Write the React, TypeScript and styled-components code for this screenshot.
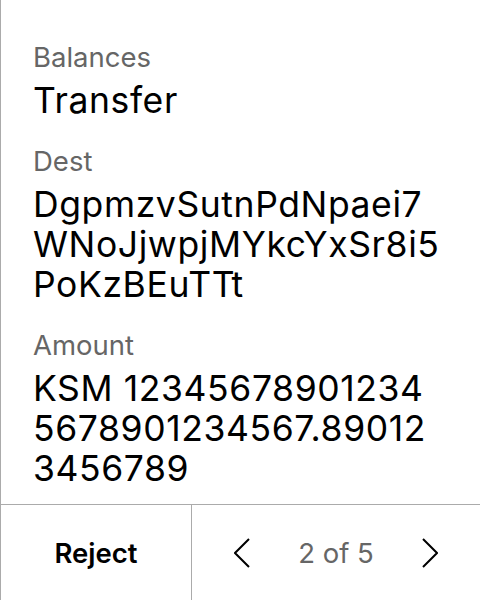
import React from "react";
import styled, { createGlobalStyle } from "styled-components";

const Global = createGlobalStyle`
  html, body { margin: 0; padding: 0; background: #fff; }
  body { font-family: Inter, "Noto Sans", sans-serif; }
  * { box-sizing: border-box; }
`;

const Screen = styled.div`
  width: 480px;
  height: 600px;
  display: flex;
  flex-direction: column;
  border-left: 1px solid #ababab;
  background: #fff;
`;

const Content = styled.div`
  flex: 1;
  padding: 41px 38px 0 32px;
  display: flex;
  flex-direction: column;
  gap: 24px;
`;

const Field = styled.div`
  display: flex;
  flex-direction: column;
  gap: 8px;
`;

const Label = styled.div`
  font-size: 27.5px;
  line-height: 32px;
  color: #666;
`;

const Value = styled.div`
  font-size: 35.5px;
  line-height: 40px;
  letter-spacing: 0.6px;
  color: #000;
  word-break: break-all;
`;

const Footer = styled.div`
  height: 96px;
  display: flex;
  border-top: 1px solid #ababab;
`;

const RejectButton = styled.div`
  width: 191px;
  display: flex;
  align-items: center;
  justify-content: center;
  font-size: 27.5px;
  font-weight: 600;
  color: #000;
  border-right: 1px solid #ababab;
`;

const Pager = styled.div`
  flex: 1;
  display: flex;
  align-items: center;
  justify-content: space-between;
  padding: 0 42px 0 42px;
`;

const PageText = styled.div`
  font-size: 27.5px;
  color: #666;
`;

const Chevron = ({ dir }: { dir: "left" | "right" }) => (
  <svg width="16" height="30" viewBox="0 0 16 30" fill="none">
    <polyline
      points={dir === "left" ? "15,1 1,15 15,29" : "1,1 15,15 1,29"}
      stroke="#000"
      strokeWidth="2"
    />
  </svg>
);

export default function App() {
  return (
    <>
      <Global />
      <Screen>
        <Content>
          <Field>
            <Label>Balances</Label>
            <Value>Transfer</Value>
          </Field>
          <Field>
            <Label>Dest</Label>
            <Value>DgpmzvSutnPdNpaei7WNoJjwpjMYkcYxSr8i5PoKzBEuTTt</Value>
          </Field>
          <Field>
            <Label>Amount</Label>
            <Value>KSM 123456789012345678901234567.890123456789</Value>
          </Field>
        </Content>
        <Footer>
          <RejectButton>Reject</RejectButton>
          <Pager>
            <Chevron dir="left" />
            <PageText>2 of 5</PageText>
            <Chevron dir="right" />
          </Pager>
        </Footer>
      </Screen>
    </>
  );
}
